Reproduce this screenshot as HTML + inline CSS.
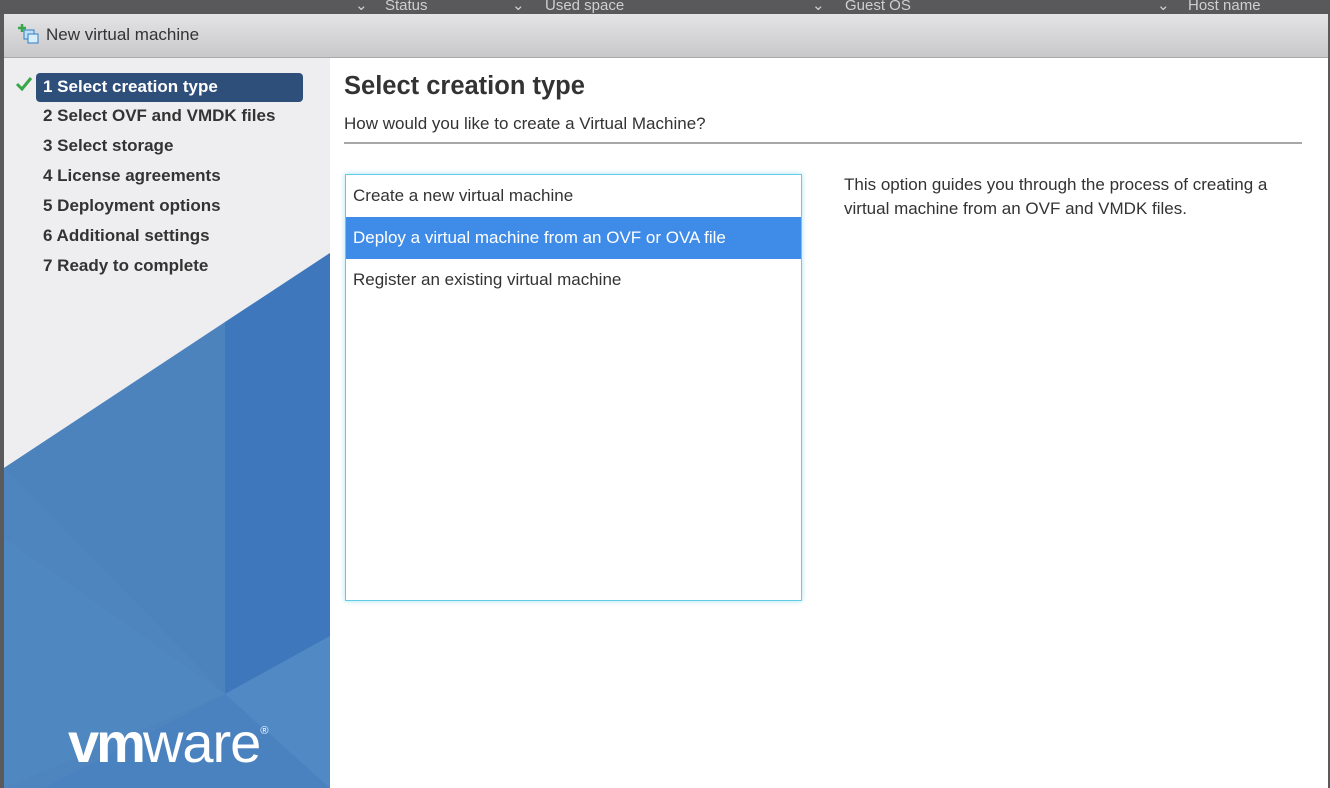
<!DOCTYPE html>
<html><head><meta charset="utf-8"><style>
*{margin:0;padding:0;box-sizing:border-box}
body{width:1330px;height:788px;overflow:hidden;background:#5a5a5c;font-family:"Liberation Sans",Arial,sans-serif;position:relative}
.top{position:absolute;top:0;left:0;width:1330px;height:14px;background:#59595b;color:#cfcfcf;font-size:15px;line-height:12px;overflow:hidden}
.top span{position:absolute;top:0}
.dlg{position:absolute;left:4px;top:14px;width:1324px;height:774px;background:#fff}
.title{position:absolute;left:0;top:0;width:100%;height:44px;background:linear-gradient(#e4e4e6,#c8c8cb);border-bottom:1px solid #a9a9ab;font-size:17px;color:#333;line-height:42px;padding-left:42px}
.side{position:absolute;left:0;top:44px;width:326px;height:730px;background:#eeeef0;overflow:hidden}
.step{position:absolute;left:39px;font-size:17px;font-weight:bold;color:#333;height:22px;line-height:22px}
.sel{position:absolute;left:32px;top:15px;width:267px;height:29px;background:#2f4f7b;border-radius:4px}
h1{position:absolute;left:340px;top:58px;font-size:25.5px;font-weight:bold;color:#333}
.sub{position:absolute;left:340px;top:100px;font-size:17px;color:#333}
.hr{position:absolute;left:340px;top:128px;width:958px;height:2px;background:#a8a8a8}
.list{position:absolute;left:341px;top:160px;width:457px;height:427px;border:1px solid #63cbe6;box-shadow:0 0 5px #a6e2f2}
.it{position:absolute;left:0;width:455px;height:42px;line-height:42px;padding-left:7px;font-size:17px;color:#333}
.desc{position:absolute;left:840px;top:159px;font-size:17px;color:#333;line-height:24px}
</style></head><body>
<div class="top">
<span style="left:355px">&#8964;</span><span style="left:385px">Status</span><span style="left:512px">&#8964;</span><span style="left:545px">Used space</span><span style="left:812px">&#8964;</span><span style="left:845px">Guest OS</span><span style="left:1157px">&#8964;</span><span style="left:1188px">Host name</span>
</div>
<div class="dlg">
<div class="title">New virtual machine
<svg style="position:absolute;left:14px;top:9px" width="24" height="22" viewBox="0 0 24 22"><rect x="6" y="7" width="10" height="9" fill="#bfe0f6" stroke="#2f7fc8"/><rect x="10" y="11" width="10" height="9" fill="#d8eefb" stroke="#2f7fc8"/><path d="M4 1v8M0 5h8" stroke="#3aa64a" stroke-width="2.5"/></svg>
</div>
<div class="side">
<svg style="position:absolute;left:0;top:0" width="326" height="730" viewBox="0 0 326 730">
<polygon points="326,195 0,410 0,730 326,730" fill="#4f85bf"/>
<polygon points="221,264 326,195 326,578 221,636" fill="#3f77bd"/>
<polygon points="0,410 221,264 221,636" fill="#4d83bd"/>
<polygon points="0,480 221,636 0,730" fill="#4f88c2" opacity=".8"/>
<polygon points="221,636 326,578 326,730 221,730" fill="#5089c4"/>
<polygon points="40,730 221,636 326,730" fill="#4a82c0"/>
</svg>
<svg style="position:absolute;left:11px;top:18px" width="18" height="16" viewBox="0 0 18 16"><path d="M2 8l5 5L16 2" stroke="#3aa64a" stroke-width="3" fill="none"/></svg>
<div class="sel"></div>
<div class="step" style="top:18px;color:#fff">1 Select creation type</div>
<div class="step" style="top:47px">2 Select OVF and VMDK files</div>
<div class="step" style="top:77px">3 Select storage</div>
<div class="step" style="top:107px">4 License agreements</div>
<div class="step" style="top:137px">5 Deployment options</div>
<div class="step" style="top:167px">6 Additional settings</div>
<div class="step" style="top:197px">7 Ready to complete</div>
<div style="position:absolute;left:64px;top:657px;color:#fff;font-size:56px;letter-spacing:-1px;line-height:56px"><b style="letter-spacing:-3px">vm</b>ware<span style="font-size:11px;position:relative;top:-28px">®</span></div>
</div>
<h1>Select creation type</h1>
<div class="sub">How would you like to create a Virtual Machine?</div>
<div class="hr"></div>
<div class="list">
<div class="it" style="top:0">Create a new virtual machine</div>
<div class="it" style="top:42px;background:#3f8ce8;color:#fff">Deploy a virtual machine from an OVF or OVA file</div>
<div class="it" style="top:84px">Register an existing virtual machine</div>
</div>
<div class="desc">This option guides you through the process of creating a<br>virtual machine from an OVF and VMDK files.</div>
</div>
</body></html>
